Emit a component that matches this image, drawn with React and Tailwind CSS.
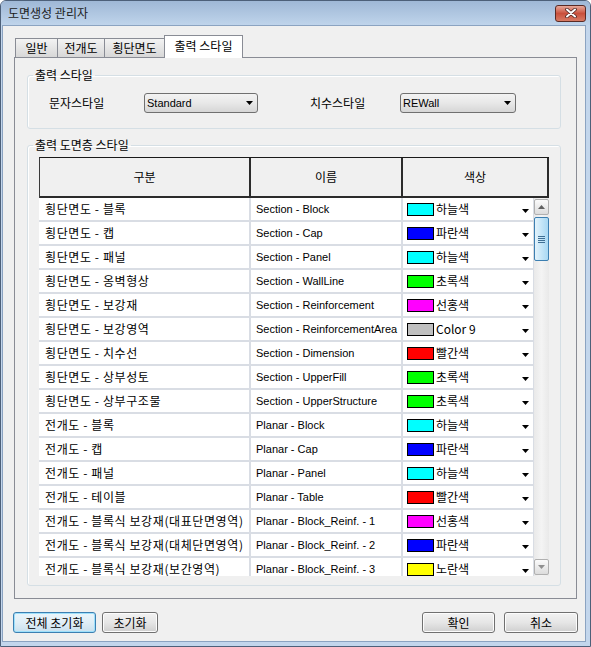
import React from "react";

const rows = [
  { a: "횡단면도 - 블록", b: "Section - Block", c: "bg-[#00ffff]", n: "하늘색" },
  { a: "횡단면도 - 캡", b: "Section - Cap", c: "bg-[#0000ff]", n: "파란색" },
  { a: "횡단면도 - 패널", b: "Section - Panel", c: "bg-[#00ffff]", n: "하늘색" },
  { a: "횡단면도 - 옹벽형상", b: "Section - WallLine", c: "bg-[#00ff00]", n: "초록색" },
  { a: "횡단면도 - 보강재", b: "Section - Reinforcement", c: "bg-[#ff00ff]", n: "선홍색" },
  { a: "횡단면도 - 보강영역", b: "Section - ReinforcementArea", c: "bg-[#c0c0c0]", n: "Color 9" },
  { a: "횡단면도 - 치수선", b: "Section - Dimension", c: "bg-[#ff0000]", n: "빨간색" },
  { a: "횡단면도 - 상부성토", b: "Section - UpperFill", c: "bg-[#00ff00]", n: "초록색" },
  { a: "횡단면도 - 상부구조물", b: "Section - UpperStructure", c: "bg-[#00ff00]", n: "초록색" },
  { a: "전개도 - 블록", b: "Planar - Block", c: "bg-[#00ffff]", n: "하늘색" },
  { a: "전개도 - 캡", b: "Planar - Cap", c: "bg-[#0000ff]", n: "파란색" },
  { a: "전개도 - 패널", b: "Planar - Panel", c: "bg-[#00ffff]", n: "하늘색" },
  { a: "전개도 - 테이블", b: "Planar - Table", c: "bg-[#ff0000]", n: "빨간색" },
  { a: "전개도 - 블록식 보강재(대표단면영역)", b: "Planar - Block_Reinf. - 1", c: "bg-[#ff00ff]", n: "선홍색" },
  { a: "전개도 - 블록식 보강재(대체단면영역)", b: "Planar - Block_Reinf. - 2", c: "bg-[#0000ff]", n: "파란색" },
  { a: "전개도 - 블록식 보강재(보간영역)", b: "Planar - Block_Reinf. - 3", c: "bg-[#ffff00]", n: "노란색" },
];

function Tri({ className = "", color = "#000", up = false }) {
  return (
    <svg width="7" height="4" viewBox="0 0 7 4" className={className}>
      {up ? <path d="M0 4h7L3.5 0z" fill={color} /> : <path d="M0 0h7L3.5 4z" fill={color} />}
    </svg>
  );
}

function Combo({ w, text }) {
  return (
    <div className={`${w} h-[20px] flex items-center border border-[#707070] rounded-[3px] bg-gradient-to-b from-[#f3f3f3] via-[#e8e8e8] to-[#d6d6d6] pl-[2px] pr-[4px]`}>
      <span className="font-['Liberation_Sans',sans-serif] text-[11px] leading-[14px] text-black">{text}</span>
      <Tri className="ml-auto" />
    </div>
  );
}

function Btn({ w, children, focused = false }) {
  return (
    <div
      className={`${w} h-[21px] flex items-center justify-center rounded-[3px] border leading-[16px] ${
        focused
          ? "border-[#3c7fb1] bg-gradient-to-b from-[#eaf5fb] via-[#e0eef6] to-[#c9e0ee] shadow-[inset_0_0_0_1px_#9ee0fb]"
          : "border-[#707070] bg-gradient-to-b from-[#f2f2f2] via-[#e6e6e6] to-[#cfcfcf] shadow-[inset_0_0_0_1px_#fcfcfc]"
      }`}
    >
      {children}
    </div>
  );
}

export default function App() {
  return (
    <div className="w-[591px] h-[647px] flex flex-col border border-[#4d6079] rounded-t-[6px] bg-[#c3d6ec] font-['Noto_Sans_CJK_KR',sans-serif] text-[12px] text-black overflow-hidden">
      {/* Title bar */}
      <div className="h-[24px] flex items-center justify-between pl-[7px] pr-[4px] bg-gradient-to-b from-[#9fb8d6] to-[#bfd4eb]">
        <span className="leading-[16px] text-[#1b1b1b]">도면생성 관리자</span>
        <div className="w-[31px] h-[17px] flex items-center justify-center rounded-[3px] border border-[#5a2a24] bg-gradient-to-b from-[#e6a89a] via-[#c9503c] to-[#d77a64]">
          <svg width="12" height="10" viewBox="0 0 12 10">
            <path d="M2 1.5L10 8.5M10 1.5L2 8.5" stroke="#4a2420" strokeWidth="3.6" strokeLinecap="round" />
            <path d="M2 1.5L10 8.5M10 1.5L2 8.5" stroke="#ffffff" strokeWidth="2" strokeLinecap="round" />
          </svg>
        </div>
      </div>

      {/* Content */}
      <div className="flex-1 ml-[1px] mr-[4px] mb-[4px] border border-[#8ba3c1] bg-[#f0f0f0] flex flex-col pt-[9px]">
        {/* Tabs */}
        <div className="flex items-end h-[22px] pl-[12px]">
          <div className="w-[43px] h-[19px] flex items-center justify-center border-l border-t border-r border-[#898c95] bg-gradient-to-b from-[#f3f3f3] to-[#d8d8d8] leading-[16px]">일반</div>
          <div className="w-[47px] h-[19px] flex items-center justify-center border-t border-r border-[#898c95] bg-gradient-to-b from-[#f3f3f3] to-[#d8d8d8] leading-[16px]">전개도</div>
          <div className="w-[59px] h-[19px] flex items-center justify-center border-t border-[#898c95] bg-gradient-to-b from-[#f3f3f3] to-[#d8d8d8] leading-[16px]">횡단면도</div>
          <div className="relative z-10 w-[79px] h-[23px] -mb-[1px] flex items-center justify-center pb-[3px] border-l border-t border-r border-[#898c95] bg-white leading-[16px]">출력 스타일</div>
        </div>

        {/* Panel */}
        <div className="ml-[11px] mr-[8px] border border-[#898c95] bg-[#f0f0f0] pt-[9px] pb-[12px]">
          <fieldset className="ml-[12px] mr-[15px] border border-[#d5dfe5] rounded-[3px] pt-[10px] pb-[15px] shadow-[inset_1px_1px_0_#ffffff]">
            <legend className="ml-[5px] px-[2px] leading-[16px]">출력 스타일</legend>
            <div className="flex items-center pl-[21px]">
              <span className="w-[95px] leading-[16px]">문자스타일</span>
              <Combo w="w-[114px]" text="Standard" />
              <span className="ml-[52px] w-[90px] leading-[16px]">치수스타일</span>
              <Combo w="w-[116px]" text="REWall" />
            </div>
          </fieldset>

          <fieldset className="mt-[8px] ml-[12px] mr-[15px] border border-[#d5dfe5] rounded-[3px] pt-[4px] pb-[9px] px-[11px] shadow-[inset_1px_1px_0_#ffffff]">
            <legend className="ml-[-6px] px-[2px] leading-[16px]">출력 도면층 스타일</legend>
            <div className="w-[510px] h-[419px] flex flex-col overflow-hidden">
              {/* Header */}
              <div className="flex h-[41px] border-t border-l border-t-[#1a1a1a] border-l-[#3a3a3a] bg-[#f0f0f0] shrink-0">
                <div className="w-[211px] flex items-center justify-center border-r-2 border-b-2 border-[#2b2b2b] leading-[16px]">구분</div>
                <div className="w-[152px] flex items-center justify-center border-r-2 border-b-2 border-[#2b2b2b] leading-[16px]">이름</div>
                <div className="w-[146px] flex items-center justify-center border-r-2 border-b-2 border-[#2b2b2b] leading-[16px]">색상</div>
              </div>
              {/* Body */}
              <div className="flex h-[378px]">
                <div className="w-[495px] overflow-hidden">
                  {rows.map((r, i) => (
                    <div key={i} className="flex h-[24px]">
                      <div className="w-[212px] flex items-center pl-[6px] bg-white border-r-2 border-b-2 border-[#d9dde4] whitespace-nowrap overflow-hidden leading-[16px] tracking-[0.6px]">{r.a}</div>
                      <div className="w-[152px] flex items-center pl-[5px] bg-white border-r-2 border-b-2 border-[#d9dde4] whitespace-nowrap overflow-hidden font-['Liberation_Sans',sans-serif] text-[11px] leading-[14px]">{r.b}</div>
                      <div className="w-[131px] flex items-center pl-[4px] pr-[4px] bg-white border-r border-b-2 border-[#d9dde4]">
                        <span className={`w-[27px] h-[13px] border border-black ${r.c}`} />
                        <span className="ml-[2px] leading-[16px] whitespace-nowrap">{r.n}</span>
                        <Tri className="ml-auto mt-[3px]" />
                      </div>
                    </div>
                  ))}
                </div>
                {/* Scrollbar */}
                <div className="w-[15px] flex flex-col bg-gradient-to-r from-[#e9e9e9] via-[#f4f4f4] to-[#e9e9e9] pt-[1px] pb-[1px]">
                  <div className="h-[16px] flex items-center justify-center rounded-[2px] border border-[#b0b0b0] bg-gradient-to-b from-[#fbfbfb] to-[#dcdcdc]">
                    <Tri up color="#606060" />
                  </div>
                  <div className="mt-[2px] h-[44px] flex items-center justify-center rounded-[2px] border border-[#3c7fb1] bg-gradient-to-r from-[#e3f3fc] via-[#c5e6f8] to-[#a8d8f3]">
                    <svg width="7" height="7" viewBox="0 0 7 7">
                      <path d="M0 0.5h7M0 2.5h7M0 4.5h7M0 6.5h7" stroke="#3f6f94" strokeWidth="1" />
                    </svg>
                  </div>
                  <div className="mt-auto h-[16px] flex items-center justify-center rounded-[2px] border border-[#b0b0b0] bg-gradient-to-b from-[#fbfbfb] to-[#dcdcdc]">
                    <Tri color="#909090" />
                  </div>
                </div>
              </div>
            </div>
          </fieldset>
        </div>

        {/* Buttons */}
        <div className="flex items-center mt-[13px] pl-[10px] pr-[7px]">
          <Btn w="w-[83px]" focused>전체 초기화</Btn>
          <div className="ml-[6px]">
            <Btn w="w-[56px]">초기화</Btn>
          </div>
          <div className="ml-auto">
            <Btn w="w-[73px]">확인</Btn>
          </div>
          <div className="ml-[9px]">
            <Btn w="w-[74px]">취소</Btn>
          </div>
        </div>
      </div>
    </div>
  );
}
